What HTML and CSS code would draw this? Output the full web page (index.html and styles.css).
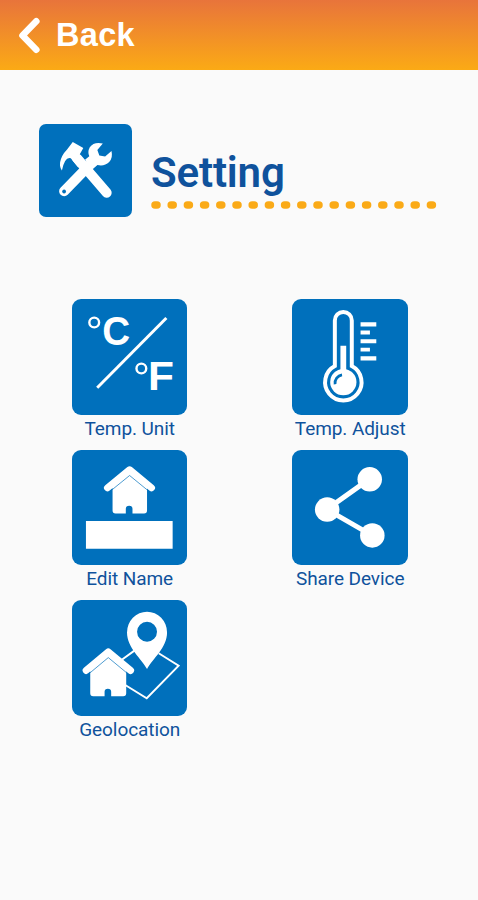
FILE: index.html
```html
<!DOCTYPE html>
<html lang="en">
<head>
<meta charset="utf-8">
<title>Setting</title>
<link rel="stylesheet" href="styles.css">
</head>
<body>
<header class="bar">
  <svg class="chevron" viewBox="0 0 24 38"><path d="M19.3 4.3 5.5 18.5 19.3 32.7"/></svg>
  <span class="back">Back</span>
</header>
<main>
  <section class="title">
    <svg class="tools" viewBox="0 0 93 93">
      <path d="M33.7 18.2 44.3 24.2 40.5 31 46 37.5 39 43.5 31.7 34.5Q25.8 32.5 22.8 46.8 20.4 43.5 21 38.5 22.2 31.5 28 25.6Z"/>
      <path d="M46 36 50.3 32.5Q48.3 28 50.8 23.4 54.8 17.6 63.9 19.6L58.4 26 60.4 31.6 66.2 32.6 72.6 27.2Q74.2 34 70.3 38.2 65.5 42.8 58.5 41.2L54 45Z"/>
      <path class="line round" d="M38 34.5 67.8 69" stroke-width="10"/>
      <path class="line round" d="M53.8 38 25 67.6" stroke-width="10"/>
      <circle class="hole" cx="25" cy="67.8" r="1.9"/>
    </svg>
    <div class="heading">
      <h1>Setting</h1>
      <svg class="dots" viewBox="0 0 286 8"><path d="M4 4H282"/></svg>
    </div>
  </section>
  <section class="grid">
    <div class="item">
      <svg class="tile" viewBox="0 0 116 116">
        <circle class="line" cx="22.3" cy="23.6" r="4.9" stroke-width="2.4"/>
        <text x="30.3" y="45.8" textLength="28" lengthAdjust="spacingAndGlyphs">C</text>
        <path class="line" d="M94.7 19 25.3 89" stroke-width="3"/>
        <circle class="line" cx="69.6" cy="69.7" r="4.9" stroke-width="2.4"/>
        <text x="76.4" y="91.2" textLength="26" lengthAdjust="spacingAndGlyphs">F</text>
      </svg>
      <span class="label">Temp. Unit</span>
    </div>
    <div class="item">
      <svg class="tile" viewBox="0 0 116 116">
        <path class="line" stroke-width="4" d="M43 67.3V21.5a8.5 8.5 0 0 1 17 0v45.8a18.3 18.3 0 1 1-17 0Z"/>
        <circle cx="51.5" cy="83.4" r="13.2"/>
        <path d="M48.6 74V47h5.8v27Z"/>
        <path class="cut" stroke-width="2.7" d="M43.2 85.5a8.3 8.3 0 0 1 7-9.3"/>
        <path d="M68.8 23.3h15.8v4.2H68.8zM68.8 31.7h9.4v3.8h-9.4zM68.8 40.3h15.8v4H68.8zM68.8 49h9.4v3.8h-9.4zM68.8 57.4h15.8v4.2H68.8z"/>
      </svg>
      <span class="label">Temp. Adjust</span>
    </div>
    <div class="item">
      <svg class="tile" viewBox="0 0 116 116">
        <path d="M40.7 36 57.9 21 75.3 36V60.6Q75.3 63.6 72.3 63.6H60.7V59Q60.7 56 57.4 56 54 56 54 59V63.6H43.7Q40.7 63.6 40.7 60.6Z"/>
        <path class="line round" d="M35.6 38 57.8 19.8 79.8 38" stroke-width="7"/>
        <path class="seam" d="M38.5 41.3 57.8 25.6 77 41.3"/>
        <path d="M14 71.3h87V99H14z"/>
      </svg>
      <span class="label">Edit Name</span>
    </div>
    <div class="item">
      <svg class="tile" viewBox="0 0 116 116">
        <path class="line" d="M77.9 29 34.9 59.6 80.3 85.6" stroke-width="5"/>
        <circle cx="35.3" cy="59.8" r="12.3"/><circle cx="78" cy="29.4" r="12.3"/><circle cx="80.6" cy="85.7" r="12.3"/>
      </svg>
      <span class="label">Share Device</span>
    </div>
    <div class="item">
      <svg class="tile" viewBox="0 0 116 116">
        <path class="line" stroke-width="1.9" d="M64 49.8 50 60M87 53.5 107 65.8 75 98.6 53 85"/>
        <path fill-rule="evenodd" d="M75.3 69.2C70 59 55.2 48 55.2 32.5a20.1 20.8 0 0 1 40.2 0C95.4 48 80.6 59 75.3 69.2ZM75.3 21.8a10 10 0 1 0 0 20 10 10 0 1 0 0-20Z"/>
        <path d="M18.3 69 36.3 53 54.4 69V93.5Q54.4 96.5 51.4 96.5H39.3V92Q39.3 89 36 89 32.7 89 32.7 92V96.5H21.3Q18.3 96.5 18.3 93.5Z"/>
        <path class="line round" d="M14.2 70.7 36.4 52 58.8 70.7" stroke-width="7"/>
        <path class="seam" d="M17.5 73.6 36.4 57.8 55.5 73.6"/>
      </svg>
      <span class="label">Geolocation</span>
    </div>
  </section>
</main>
</body>
</html>
```
FILE: styles.css
```css
body {
  margin: 0;
  min-height: 900px;
  background: #fafafa;
  color: #0f529c;
  font-family: Roboto, sans-serif;
}
.bar {
  box-sizing: border-box;
  height: 70px;
  display: flex;
  align-items: flex-start;
  padding: 17px 0 0 17px;
  background: linear-gradient(#e8743b, #fbaa15);
}
.chevron {
  width: 24px;
  height: 38px;
  fill: none;
  stroke: #fff;
  stroke-width: 6.6;
  stroke-linecap: round;
  stroke-linejoin: round;
}
.back {
  margin-left: 15px;
  color: #fff;
  font: bold 32.5px/36px "Liberation Sans", sans-serif;
  letter-spacing: .3px;
}
.title {
  display: flex;
  padding: 54.4px 0 0 39px;
}
.tools {
  width: 93px;
  height: 92.6px;
  border-radius: 7px;
  background: #0070bc;
  fill: #fff;
}
.tools .hole { fill: #0070bc; }
.heading {
  display: flex;
  flex-direction: column;
  padding: 23.6px 0 0 19px;
}
h1 {
  margin: 0;
  font-size: 42px;
  line-height: 50px;
  font-weight: 600;
  letter-spacing: -.15px;
}
.dots {
  width: 286px;
  height: 8px;
  margin-top: 3px;
  fill: none;
  stroke: #faaa17;
  stroke-width: 7.5;
  stroke-linecap: round;
  stroke-dasharray: 2 14.2;
}
.grid {
  display: grid;
  grid-template-columns: 116px 116px;
  column-gap: 104.5px;
  grid-auto-rows: 150.7px;
  padding: 82px 0 0 71.7px;
}
.item {
  display: flex;
  flex-direction: column;
  align-items: center;
}
.tile {
  width: 115.6px;
  height: 115.6px;
  border-radius: 9px;
  background: #0070bc;
  fill: #fff;
}
.tile text { font: bold 40px "Liberation Sans", sans-serif; }
.line { fill: none; stroke: #fff; }
.round { stroke-linecap: round; stroke-linejoin: round; }
.cut { fill: none; stroke: #0070bc; }
.seam { fill: none; stroke: #0070bc; stroke-width: .7; }
.label {
  margin-top: 2.2px;
  font-size: 19px;
  line-height: 24px;
  font-weight: 370;
  letter-spacing: -.08px;
  white-space: nowrap;
}
```
